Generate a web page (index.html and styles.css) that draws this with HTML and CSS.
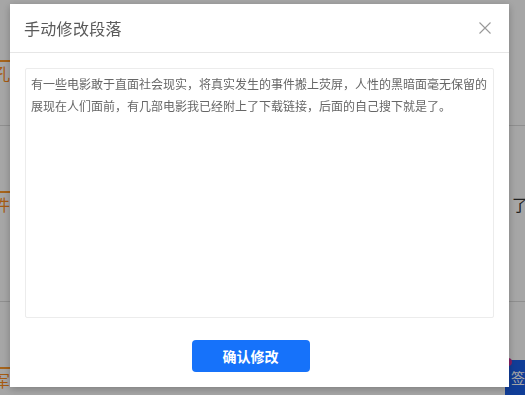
FILE: index.html
```html
<!DOCTYPE html>
<html lang="zh-CN">

<head>
    <meta charset="UTF-8">
    <meta name="viewport" content="width=device-width, initial-scale=1.0">
    <title>手动修改段落</title>
    <link rel="stylesheet" href="styles.css">
</head>

<body>
    <!-- page behind the dialog -->
    <div class="page">
        <div class="item item-first">
            <div class="item-line"></div>
            <div class="item-text">孔</div>
        </div>
        <div class="item item-second">
            <div class="item-line"></div>
            <div class="item-text">件<span class="item-end">了</span></div>
        </div>
        <div class="item item-third">
            <div class="item-line"></div>
            <div class="item-text">军</div>
            <div class="item-links">
                <span class="link-a"></span>
                <span class="link-b"></span>
            </div>
        </div>
    </div>
    <div class="sign-btn">签</div>
    <div class="sign-dot"></div>

    <div class="mask"></div>

    <div class="dialog">
        <div class="dialog-header">
            <span class="dialog-title">手动修改段落</span>
            <span class="dialog-close">
                <svg width="12" height="12" viewBox="0 0 12 12">
                    <path d="M0.5 0.5 L11.5 11.5 M11.5 0.5 L0.5 11.5" stroke="#999" stroke-width="1.1" fill="none" />
                </svg>
            </span>
        </div>
        <div class="dialog-body">
            <textarea class="para-input">有一些电影敢于直面社会现实，将真实发生的事件搬上荧屏，人性的黑暗面毫无保留的展现在人们面前，有几部电影我已经附上了下载链接，后面的自己搜下就是了。</textarea>
        </div>
        <div class="dialog-footer">
            <button class="confirm-btn">确认修改</button>
        </div>
    </div>
</body>
</html>
```

FILE: styles.css
```css
body {
    margin: 0;
    padding: 0;
    background-color: #fff;
    font-family: "Noto Sans CJK SC", "Noto Sans", sans-serif;
    color: #333;
    overflow: hidden;
    height: 395px;
}

.page {
    padding-top: 60px;
}

.item {
    box-sizing: border-box;
    border-bottom: 1px solid #dcdcdc;
}

.item-first {
    height: 66px;
    margin-bottom: 65px;
}

.item-second {
    height: 111px;
    margin-bottom: 65px;
}

.item-third {
    border-bottom: none;
}

.item-line {
    width: 40px;
    height: 2px;
    background-color: #ff9a2a;
}

.item-text {
    display: flex;
    justify-content: space-between;
    margin-left: -6px;
    font-size: 16px;
    line-height: 22px;
    color: #ff8c1a;
}

.item-end {
    color: #333;
    margin-right: -3px;
}

.item-links {
    position: relative;
    height: 12px;
}

.link-a,
.link-b {
    position: absolute;
    top: 6px;
    height: 2px;
    background-color: #1e5dd6;
}

.link-a {
    left: 90px;
    width: 28px;
}

.link-b {
    left: 364px;
    width: 42px;
}

.sign-btn {
    position: fixed;
    right: 0;
    bottom: 0;
    width: 20px;
    height: 35px;
    background-color: #1a5ee8;
    color: #fff;
    font-size: 14px;
    line-height: 35px;
    text-align: right;
    overflow: hidden;
}

.sign-dot {
    position: fixed;
    left: 504px;
    top: 358px;
    width: 8px;
    height: 8px;
    border-radius: 50%;
    background-color: #d0329c;
}

.mask {
    position: fixed;
    inset: 0;
    background-color: rgba(0, 0, 0, 0.35);
}

.dialog {
    position: fixed;
    left: 10px;
    top: 4px;
    width: 499px;
    height: 383px;
    background-color: #fff;
    box-shadow: 0 2px 8px rgba(0, 0, 0, 0.25);
    display: flex;
    flex-direction: column;
}

.dialog-header {
    height: 49px;
    box-sizing: border-box;
    border-bottom: 1px solid #e6e6e6;
    display: flex;
    align-items: center;
    justify-content: space-between;
    padding: 0 18px 0 14px;
}

.dialog-title {
    font-size: 16px;
    color: #5a5a5a;
    letter-spacing: 0.3px;
}

.dialog-close {
    display: flex;
    cursor: pointer;
}

.dialog-body {
    padding: 15px 15px 0;
}

.para-input {
    display: block;
    box-sizing: border-box;
    width: 469px;
    height: 250px;
    margin: 0;
    padding: 4px 5px;
    border: 1px solid #ececec;
    border-radius: 2px;
    resize: none;
    outline: none;
    font-family: "Noto Sans CJK SC", sans-serif;
    font-size: 12px;
    line-height: 22px;
    color: #666;
}

.dialog-footer {
    display: flex;
    justify-content: center;
    padding-top: 22px;
    padding-right: 18px;
}

.confirm-btn {
    width: 118px;
    height: 32px;
    border: none;
    border-radius: 4px;
    background-color: #1672fa;
    color: #fff;
    font-family: "Noto Sans CJK SC", sans-serif;
    font-size: 14px;
    font-weight: bold;
    cursor: pointer;
}
```
